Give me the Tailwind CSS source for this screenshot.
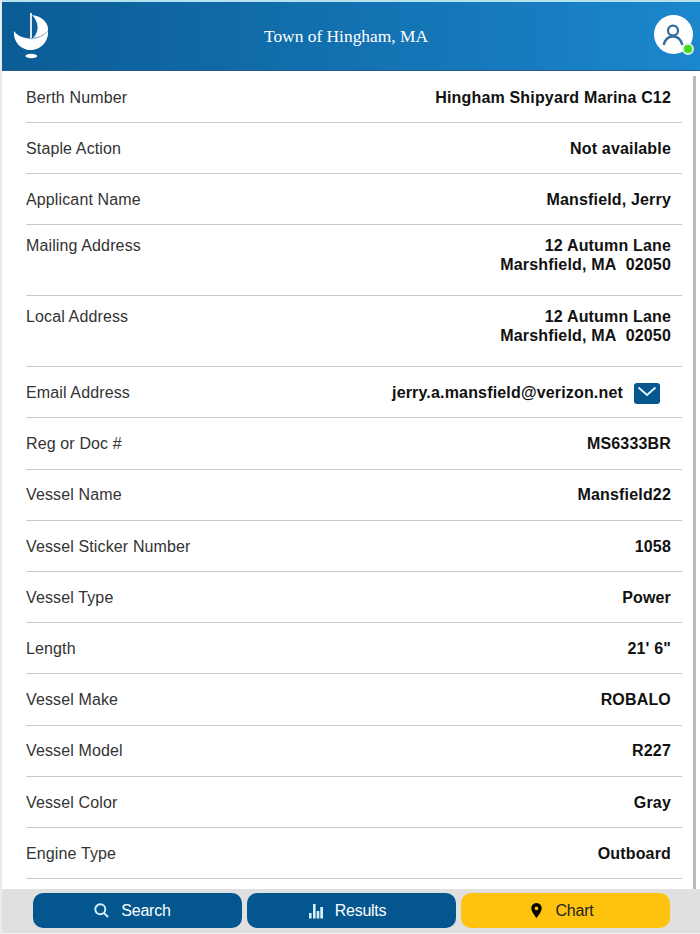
<!DOCTYPE html>
<html lang="en">
<head>
<meta charset="utf-8">
<title>Town of Hingham, MA</title>
<script src="https://cdn.jsdelivr.net/npm/@tailwindcss/browser@4"></script>
</head>
<body class="bg-white font-['Liberation_Sans',Arial,sans-serif] text-[16px]">
<div class="flex h-[934px] w-[700px] flex-col overflow-hidden border-l-2 border-[#e9ecee] bg-white">
  <header class="flex h-[71px] shrink-0 items-center justify-between border-t-2 border-b border-t-[#b5e2ef] border-b-[#24598a] bg-linear-to-r from-[#0b5c95] to-[#1b87cd] pr-[7px] pl-[11px]">
    <svg class="h-[48px] w-[38px]" viewBox="0 0 38 48" fill="none">
      <path d="M1 19C5 24.500 11 26.500 18 26.500C26 26.500 31 23 35 18.500C36 29 28 38 18 38C8 38 0 30 1 19Z" fill="#fff"/>
      <path d="M19 3C29 4 36 11 35 19C31 23 26 25.500 20 26C26.500 20 26 10 19 3Z" fill="#fff"/>
      <path d="M18 1V26" stroke="#d7eaf5" stroke-width="2"/>
      <path d="M18 27C26 26 31 23 35 19" stroke="#8db6d1" stroke-width="1"/>
      <ellipse cx="18.300" cy="44" rx="6" ry="2.200" fill="#fff"/>
    </svg>
    <h1 class="mr-[13px] font-['Liberation_Serif',serif] text-[17.400px] text-white">Town of Hingham, MA</h1>
    <div class="relative mb-[3px] flex size-[39px] items-center justify-center rounded-full bg-white">
      <svg class="h-[22px] w-[22px]" viewBox="0 0 22 22" fill="none" stroke="#356f9e" stroke-width="2.300"><circle cx="11" cy="6.600" r="5"/><path d="M1.700 21C3 15.500 6.500 12.500 11 12.500S19 15.500 20.300 21"/></svg>
      <span class="absolute -right-px -bottom-px size-[12px] rounded-full border-2 border-[#d5f5df] bg-[#43d91d]"></span>
    </div>
  </header>
  <div class="flex min-h-0 flex-1">
    <dl class="ml-[24px] w-[656px] shrink-0 overflow-hidden pt-[0.7px] text-[#333] [&>div]:flex [&>div]:justify-between [&>div]:border-b-[1.5px] [&>div]:border-[#cbcbcb] [&>div]:pr-[11px] [&_dd]:text-right [&_dd]:font-bold [&_dd]:tracking-[0.17px] [&_dd]:text-[#111] [&_dt]:tracking-[0.13px]">
      <div class="h-[51.2px] items-center pt-[1.5px]"><dt>Berth Number</dt><dd>Hingham Shipyard Marina C12</dd></div>
      <div class="h-[51.2px] items-center pt-[1.5px]"><dt>Staple Action</dt><dd>Not available</dd></div>
      <div class="h-[51.2px] items-center pt-[1.5px]"><dt>Applicant Name</dt><dd>Mansfield, Jerry</dd></div>
      <div class="h-[71px] pt-[11px] leading-[19px]"><dt>Mailing Address</dt><dd>12 Autumn Lane<br>Marshfield, MA&nbsp; 02050</dd></div>
      <div class="h-[71px] pt-[11px] leading-[19px]"><dt>Local Address</dt><dd>12 Autumn Lane<br>Marshfield, MA&nbsp; 02050</dd></div>
      <div class="h-[51.2px] items-center pt-[1.5px]"><dt>Email Address</dt><dd class="flex items-center gap-[11px] pr-[11px]">jerry.a.mansfield@verizon.net<svg class="h-[21px] w-[26px]" viewBox="0 0 26 21" fill="none"><rect width="26" height="21" rx="3" fill="#06578f"/><path d="M4.500 4.500L13 12L21.500 4.500" stroke="#e8f5fb" stroke-width="1.800"/></svg></dd></div>
      <div class="h-[51.2px] items-center pt-[1.5px]"><dt>Reg or Doc #</dt><dd>MS6333BR</dd></div>
      <div class="h-[51.2px] items-center pt-[1.5px]"><dt>Vessel Name</dt><dd>Mansfield22</dd></div>
      <div class="h-[51.2px] items-center pt-[1.5px]"><dt>Vessel Sticker Number</dt><dd>1058</dd></div>
      <div class="h-[51.2px] items-center pt-[1.5px]"><dt>Vessel Type</dt><dd>Power</dd></div>
      <div class="h-[51.2px] items-center pt-[1.5px]"><dt>Length</dt><dd>21' 6"</dd></div>
      <div class="h-[51.2px] items-center pt-[1.5px]"><dt>Vessel Make</dt><dd>ROBALO</dd></div>
      <div class="h-[51.2px] items-center pt-[1.5px]"><dt>Vessel Model</dt><dd>R227</dd></div>
      <div class="h-[51.2px] items-center pt-[1.5px]"><dt>Vessel Color</dt><dd>Gray</dd></div>
      <div class="h-[51.2px] items-center pt-[1.5px]"><dt>Engine Type</dt><dd>Outboard</dd></div>
    </dl>
    <div class="mt-[5px] ml-[11px] w-[3px] shrink-0 bg-[#bbb]"></div>
  </div>
  <nav class="flex h-[45px] shrink-0 gap-[5px] border-b border-[#f2f2f2] bg-[#e0e0e0] pt-[4px] pl-[31px] [&>button]:flex [&>button]:h-[35px] [&>button]:w-[209px] [&>button]:items-center [&>button]:justify-center [&>button]:rounded-[10px]">
    <button class="gap-[12px] bg-[#04568e] pr-[10px] tracking-[-0.2px] text-white"><svg class="size-[15px]" viewBox="0 0 15 15" fill="none" stroke="#d9f1fa" stroke-width="1.900"><circle cx="6.300" cy="6.300" r="5"/><path d="M9.800 9.800L14 14"/></svg>Search</button>
    <button class="gap-[11px] bg-[#04568e] pr-[9px] tracking-[-0.3px] text-white"><svg class="size-[16px]" viewBox="0 0 16 16" fill="#d9f1fa"><path d="M1 10h2.600v5.500H1zM5 1h2.600v14.500H5zM8.700 8h2.600v7.500H8.700zM12.300 4H15v11.500h-2.700z"/></svg>Results</button>
    <button class="gap-[13px] bg-[#ffc20e] pr-[6px] tracking-[-0.2px] text-[#222]"><svg class="h-[15px] w-[11px]" viewBox="0 0 11 15"><path fill="#000" fill-rule="evenodd" d="M5.500 0A5.200 5.200 0 0 0 .3 5.300C.3 9 5.500 15 5.500 15S10.700 9 10.700 5.300A5.200 5.300 0 0 0 5.500 0ZM5.500 3.400A1.900 1.900 0 1 1 5.500 7.200A1.900 1.900 0 0 1 5.500 3.400Z"/></svg>Chart</button>
  </nav>
</div>
</body>
</html>
